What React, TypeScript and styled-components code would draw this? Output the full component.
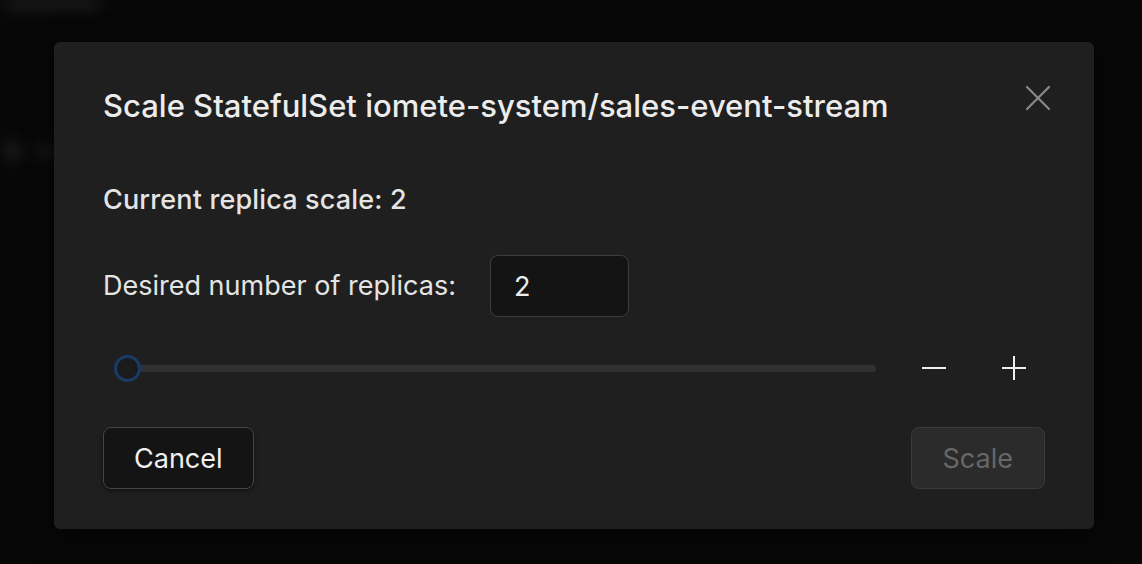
import React, { useState } from "react";
import styled, { createGlobalStyle } from "styled-components";

const GlobalStyle = createGlobalStyle`
  html, body {
    margin: 0;
    padding: 0;
    background: #0c0c0c;
    font-family: Inter, "Noto Sans", sans-serif;
    color: #e8e8e8;
  }
  * { box-sizing: border-box; }
`;

const Page = styled.div`
  position: relative;
  width: 1142px;
  height: 564px;
  overflow: hidden;
  background: #0c0c0c;
`;

const BackdropContent = styled.div`
  filter: blur(7px);
  opacity: 0.7;
  display: flex;
  flex-direction: column;
  gap: 134px;
  padding: 0 0 0 4px;
`;

const BackdropPill = styled.div`
  width: 96px;
  height: 8px;
  border-radius: 0 0 6px 6px;
  background: #444;
`;

const BackdropDots = styled.div`
  display: flex;
  gap: 16px;
  align-items: center;
`;

const BackdropDot = styled.div<{ $size: number }>`
  width: ${(p) => p.$size}px;
  height: ${(p) => p.$size}px;
  border-radius: 50%;
  background: #3c3c3c;
`;

const Overlay = styled.div`
  position: absolute;
  inset: 0;
  background: rgba(0, 0, 0, 0.35);
  padding: 42px 0 0 54px;
`;

const Modal = styled.div`
  width: 1040px;
  height: 487px;
  background: #1f1f1f;
  border-radius: 6px;
  padding: 46px 49px 40px 49px;
  display: flex;
  flex-direction: column;
  box-shadow: 0 6px 30px rgba(0, 0, 0, 0.5);
`;

const Header = styled.div`
  display: flex;
  justify-content: space-between;
  align-items: flex-start;
`;

const Title = styled.h2`
  margin: 0;
  font-size: 31px;
  line-height: 36px;
  font-weight: 500;
  color: #ececec;
`;

const CloseButton = styled.button`
  width: 32px;
  height: 32px;
  margin: -6px -9px 0 0;
  padding: 0;
  border: none;
  background: transparent;
  color: #8a8a8a;
  display: flex;
  align-items: center;
  justify-content: center;
  cursor: pointer;
`;

const Current = styled.div`
  margin-top: 60px;
  font-size: 27px;
  line-height: 32px;
  font-weight: 500;
  letter-spacing: 0.15px;
  color: #e4e4e4;
`;

const DesiredRow = styled.div`
  margin-top: 39px;
  display: flex;
  align-items: center;
  gap: 34px;
`;

const Label = styled.label`
  font-size: 27px;
  line-height: 32px;
  color: #e4e4e4;
`;

const NumberInput = styled.input`
  width: 139px;
  height: 62px;
  border-radius: 8px;
  border: 1.5px solid #3d3d3d;
  background: #141414;
  color: #ececec;
  font-family: inherit;
  font-size: 27px;
  padding: 0 23px;
  outline: none;
`;

const SliderRow = styled.div`
  margin-top: 38px;
  margin-right: 11px;
  display: flex;
  align-items: center;
  height: 26px;
`;

const Track = styled.div`
  position: relative;
  flex: 1;
  margin-left: 12px;
  height: 7px;
  border-radius: 4px;
  background: #313131;
`;

const Thumb = styled.div`
  position: absolute;
  top: 50%;
  width: 27px;
  height: 27px;
  margin: -13.5px 0 0 -1px;
  border-radius: 50%;
  border: 3px solid #1a3b66;
  background: #1b1b1b;
`;

const StepButtons = styled.div`
  display: flex;
  gap: 40px;
  margin-left: 38px;
`;

const StepButton = styled.button`
  width: 40px;
  height: 32px;
  padding: 0;
  border: none;
  background: transparent;
  color: #f0f0f0;
  display: flex;
  align-items: center;
  justify-content: center;
  cursor: pointer;
`;

const Footer = styled.div`
  margin-top: auto;
  display: flex;
  justify-content: space-between;
`;

const Button = styled.button<{ $disabled?: boolean }>`
  height: 62px;
  padding: 0 ${(p) => (p.$disabled ? "31px" : "30px")};
  border-radius: 8px;
  font-family: inherit;
  font-size: 27px;
  font-weight: 400;
  border: 1.5px solid ${(p) => (p.$disabled ? "#3a3a3a" : "#454545")};
  background: ${(p) => (p.$disabled ? "#2b2b2b" : "#141414")};
  color: ${(p) => (p.$disabled ? "#676767" : "#f0f0f0")};
  box-shadow: ${(p) => (p.$disabled ? "none" : "0 2px 4px rgba(0,0,0,0.45)")};
  cursor: ${(p) => (p.$disabled ? "default" : "pointer")};
`;

const App = () => {
  const [value, setValue] = useState("2");
  const pct = 0;

  return (
    <Page>
      <GlobalStyle />
      <BackdropContent>
        <BackdropPill />
        <BackdropDots>
          <BackdropDot $size={18} />
          <BackdropDot $size={14} />
        </BackdropDots>
      </BackdropContent>
      <Overlay>
        <Modal>
          <Header>
            <Title>Scale StatefulSet iomete-system/sales-event-stream</Title>
            <CloseButton aria-label="Close">
              <svg width="26" height="26" viewBox="0 0 26 26" fill="none">
                <path d="M2 2 L24 24 M24 2 L2 24" stroke="currentColor" strokeWidth="2.2" strokeLinecap="round" />
              </svg>
            </CloseButton>
          </Header>
          <Current>Current replica scale: 2</Current>
          <DesiredRow>
            <Label htmlFor="replicas">Desired number of replicas:</Label>
            <NumberInput id="replicas" value={value} onChange={(e) => setValue(e.target.value)} />
          </DesiredRow>
          <SliderRow>
            <Track>
              <Thumb style={{ left: `${pct}%` }} />
            </Track>
            <StepButtons>
              <StepButton aria-label="Decrease">
                <svg width="26" height="26" viewBox="0 0 26 26">
                  <path d="M1 13 H25" stroke="currentColor" strokeWidth="2" />
                </svg>
              </StepButton>
              <StepButton aria-label="Increase">
                <svg width="26" height="26" viewBox="0 0 26 26">
                  <path d="M1 13 H25 M13 1 V25" stroke="currentColor" strokeWidth="2" />
                </svg>
              </StepButton>
            </StepButtons>
          </SliderRow>
          <Footer>
            <Button>Cancel</Button>
            <Button $disabled>Scale</Button>
          </Footer>
        </Modal>
      </Overlay>
    </Page>
  );
};

export default App;
